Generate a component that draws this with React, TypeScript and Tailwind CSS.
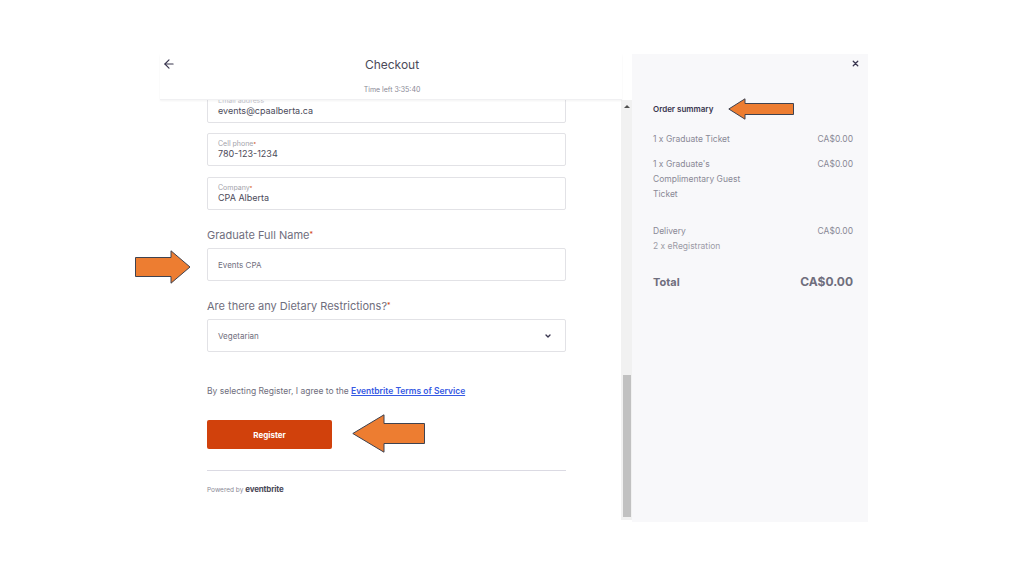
import React from "react";

const font = { fontFamily: "Inter, 'Open Sans', sans-serif" };

function Field({ label, value }: { label: string; value: string }) {
  return (
    <div className="h-[33px] border border-[#e2e2e6] rounded-[2px] pl-[10px] flex flex-col justify-center">
      <div className="text-[7px] leading-[8px] text-[#a3a3ab]">
        {label}
        <span className="text-[#d1410c] align-top text-[5px]">*</span>
      </div>
      <div className="text-[9px] leading-[12px] text-[#4b4a59]">{value}</div>
    </div>
  );
}

function Row({ left, right, sub }: { left: React.ReactNode; right: string; sub?: string }) {
  return (
    <div className="flex justify-between text-[8.5px] leading-[15px] text-[#8a8996]">
      <div className="w-[105px]">
        {left}
        {sub && <div className="text-[#9c9ba6]">{sub}</div>}
      </div>
      <div>{right}</div>
    </div>
  );
}

export default function App() {
  return (
    <div className="relative w-[1024px] h-[576px] bg-white overflow-hidden" style={font}>
      <div className="pt-[54px] pl-[160px] flex">
        {/* Left pane */}
        <div className="w-[472px] h-[468px] flex flex-col bg-white">
          <div className="h-[46px] relative shrink-0 shadow-[0_1px_2px_rgba(0,0,0,0.05)] border-b border-[#f0f0f2] mr-[10px] z-10 bg-white">
            <div className="absolute left-[2px] top-[3px] text-[#39364f]">
              <svg width="14" height="14" viewBox="0 0 24 24" fill="none" stroke="#39364f" strokeWidth="2" strokeLinecap="round" strokeLinejoin="round">
                <path d="M19 12H5" />
                <path d="M12 19l-7-7 7-7" />
              </svg>
            </div>
            <div className="text-center pt-[3px] text-[12px] leading-[15px] text-[#4b4a59] pl-[2px]">Checkout</div>
            <div className="text-center mt-[13px] text-[7px] leading-[9px] text-[#8a8996] pl-[2px]">Time left 3:35:40</div>
          </div>
          <div className="flex flex-1 min-h-0">
            <div className="flex-1 overflow-hidden pl-[47px] pr-[55px]">
              <div className="mt-[-12px]">
                <div className="h-[35px] border border-[#e2e2e6] rounded-[2px] pl-[10px] flex flex-col justify-end pb-[5px]">
                  <div className="text-[7px] leading-[8px] text-[#c4c4cc]">Email address</div>
                  <div className="text-[9px] leading-[12px] text-[#4b4a59]">events@cpaalberta.ca</div>
                </div>
                <div className="mt-[10px]"><Field label="Cell phone" value="780-123-1234" /></div>
                <div className="mt-[11px]"><Field label="Company" value="CPA Alberta" /></div>
                <div className="mt-[18px] text-[11px] leading-[14px] text-[#6f6e7d]">
                  Graduate Full Name<span className="text-[#d1410c] align-top text-[7px]">*</span>
                </div>
                <div className="mt-[6px] h-[33px] border border-[#e2e2e6] rounded-[2px] pl-[10px] flex items-center text-[8px] text-[#6f6e7d]">
                  Events CPA
                </div>
                <div className="mt-[18px] text-[11px] leading-[14px] text-[#6f6e7d]">
                  Are there any Dietary Restrictions?<span className="text-[#d1410c] align-top text-[7px]">*</span>
                </div>
                <div className="mt-[6px] h-[33px] border border-[#e2e2e6] rounded-[2px] pl-[10px] pr-[13px] flex items-center justify-between text-[8px] text-[#6f6e7d]">
                  <span>Vegetarian</span>
                  <svg width="8" height="8" viewBox="0 0 24 24" fill="none" stroke="#39364f" strokeWidth="4" strokeLinecap="round" strokeLinejoin="round">
                    <path d="M6 9l6 6 6-6" />
                  </svg>
                </div>
                <div className="mt-[34px] text-[8.5px] leading-[10px] text-[#6f6e7d]">
                  By selecting Register, I agree to the{" "}
                  <span className="text-[#3659e3] underline font-semibold">Eventbrite Terms of Service</span>
                </div>
                <div className="mt-[24px] w-[125px] h-[29px] bg-[#d1410c] rounded-[2px] flex items-center justify-center text-white text-[8px] font-bold">
                  Register
                </div>
                <div className="mt-[21px] h-px bg-[#dbdae3]" />
                <div className="mt-[12px] flex items-baseline gap-[2px] text-[6.5px] text-[#8a8996]">
                  <span>Powered by</span>
                  <span className="text-[8px] font-bold text-[#4b4a59] tracking-[-0.2px]">eventbrite</span>
                </div>
              </div>
            </div>
            {/* scrollbar */}
            <div className="w-[11px] bg-[#f1f1f1] flex flex-col items-center mb-[2px]">
              <div className="h-[12px] flex items-center justify-center">
                <div className="w-0 h-0 border-l-[3px] border-r-[3px] border-b-[3px] border-l-transparent border-r-transparent border-b-[#505050]" />
              </div>
              <div className="flex-1" />
              <div className="w-[8px] h-[142px] bg-[#c1c1c1]" />
              <div className="h-[3px]" />
            </div>
          </div>
        </div>
        {/* Right panel */}
        <div className="w-[236px] h-[468px] bg-[#f8f8fa] relative pl-[21px] pr-[15px]">
          <div className="absolute right-[8px] top-[5px]">
            <svg width="9" height="9" viewBox="0 0 24 24" fill="none" stroke="#39364f" strokeWidth="3.5" strokeLinecap="round">
              <path d="M6 6l12 12M18 6L6 18" />
            </svg>
          </div>
          <div className="pt-[49px] text-[8px] leading-[12px] font-semibold text-[#39364f]">Order summary</div>
          <div className="mt-[17px]"><Row left="1 x Graduate Ticket" right="CA$0.00" /></div>
          <div className="mt-[10px]"><Row left={<>1 x Graduate's<br />Complimentary Guest<br />Ticket</>} right="CA$0.00" /></div>
          <div className="mt-[22px]"><Row left="Delivery" sub="2 x eRegistration" right="CA$0.00" /></div>
          <div className="mt-[20px] flex justify-between text-[11px] leading-[16px] font-bold text-[#6f6e7d]">
            <span>Total</span>
            <span className="text-[12px]">CA$0.00</span>
          </div>
        </div>
      </div>

      {/* Annotation arrows */}
      <svg className="absolute left-[135px] top-[250px]" width="56" height="34" viewBox="0 0 56 34">
        <polygon points="0.5,7.5 36,7.5 36,0.8 55,17 36,33.2 36,26.5 0.5,26.5" fill="#ed7d31" stroke="#3f4350" strokeWidth="1" />
      </svg>
      <svg className="absolute left-[352px] top-[414px]" width="73" height="39" viewBox="0 0 73 39">
        <polygon points="0.8,19.5 32,0.8 32,9.5 72.5,9.5 72.5,29.5 32,29.5 32,38.2" fill="#ed7d31" stroke="#3f4350" strokeWidth="1" />
      </svg>
      <svg className="absolute left-[728px] top-[98px]" width="66" height="22" viewBox="0 0 66 22">
        <polygon points="0.8,11 17,0.8 17,5.5 65.5,5.5 65.5,16.5 17,16.5 17,21.2" fill="#ed7d31" stroke="#3f4350" strokeWidth="1" />
      </svg>
    </div>
  );
}
